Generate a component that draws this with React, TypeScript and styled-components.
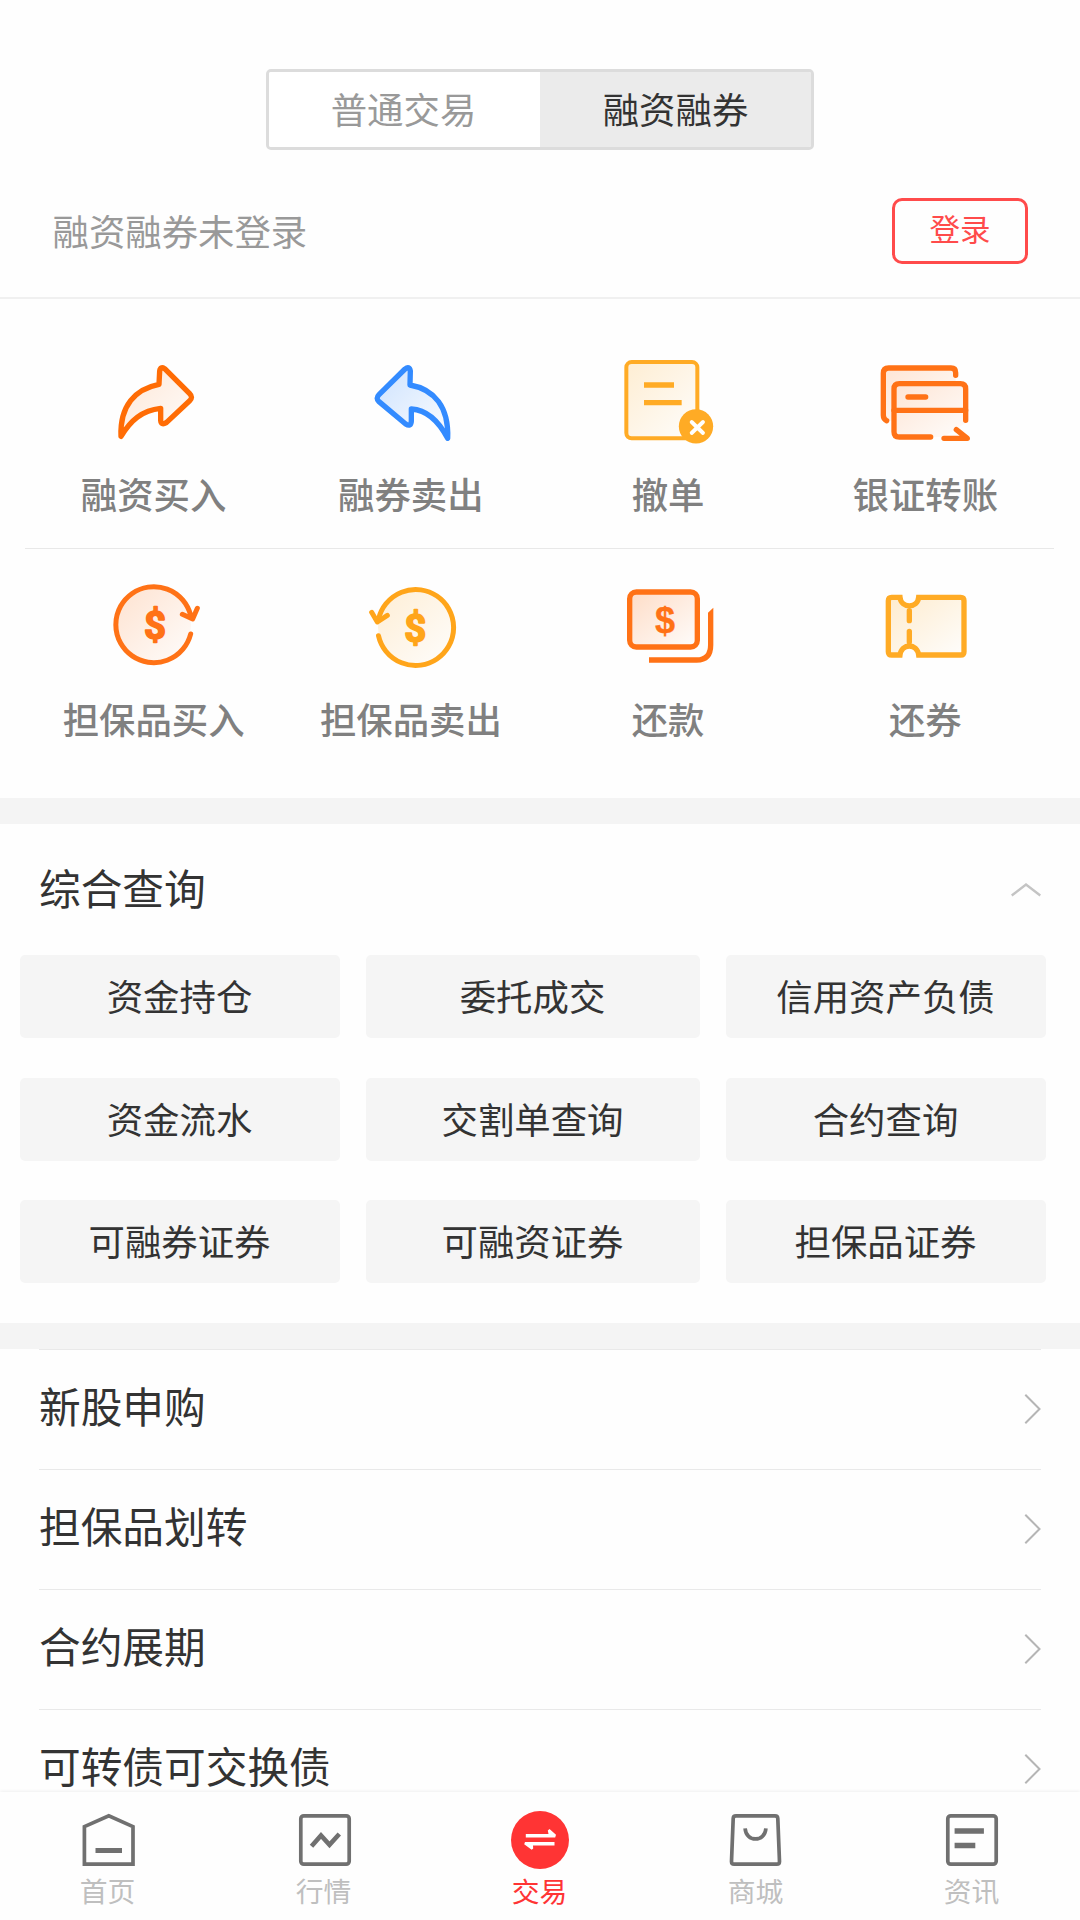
import React from "react";
import styled, { createGlobalStyle, css } from "styled-components";

const GlobalStyle = createGlobalStyle`
  * { box-sizing: border-box; }
  body {
    margin: 0;
    background: #fefefe;
    font-family: "Noto Sans CJK SC", sans-serif;
    color: #333;
  }
  button { font-family: inherit; padding: 0; margin: 0; border: 0; background: none; color: inherit; }
`;

const Page = styled.div`
  width: 1080px;
  height: 1920px;
  display: flex;
  flex-direction: column;
  overflow: hidden;
  background: #fefefe;
`;

const Content = styled.main`
  flex: 1;
  min-height: 0;
`;

const SegmentRow = styled.div`
  display: flex;
  justify-content: center;
  padding-top: 69px;
`;

const Segmented = styled.div`
  display: flex;
  width: 548px;
  height: 81px;
  border: 3px solid #dcdcdc;
  border-radius: 5px;
  overflow: hidden;
`;

const Segment = styled.button<{ $active?: boolean }>`
  flex: none;
  width: 50%;
  font-size: 36.4px;
  line-height: 72px;
  padding: 0 ${(p) => (p.$active ? 0 : 2)}px 4px 0;
  color: ${(p) => (p.$active ? "#333" : "#999")};
  background: ${(p) => (p.$active ? "#ebebeb" : "#fff")};
`;

const AccountBar = styled.div`
  display: flex;
  align-items: center;
  justify-content: space-between;
  height: 149px;
  padding: 13px 52px 0 52.5px;
  border-bottom: 2px solid #f0f0f0;
`;

const AccountText = styled.span`
  font-size: 36.4px;
  line-height: 50px;
  color: #999;
`;

const LoginButton = styled.button`
  width: 136px;
  height: 66px;
  margin-top: 2px;
  padding-bottom: 6px;
  border: 3px solid #ff4b4b;
  border-radius: 10px;
  font-size: 30.5px;
  line-height: 54px;
  color: #ff4b4b;
`;

const Shortcuts = styled.section`
  height: 499px;
  padding: 0 26px 0 25px;
`;

const ShortcutRow = styled.div<{ $top: number; $height: number; $divided?: boolean }>`
  display: grid;
  grid-template-columns: repeat(4, 1fr);
  height: ${(p) => p.$height}px;
  padding-top: ${(p) => p.$top}px;
  ${(p) => p.$divided && css`border-bottom: 1px solid #e8e8e8;`}
`;

const Shortcut = styled.div`
  display: flex;
  flex-direction: column;
  align-items: center;
`;

const ShortcutIcon = styled.svg`
  width: 100px;
  height: 100px;
  display: block;
  flex: none;
`;

const ShortcutLabel = styled.span`
  margin-top: 18px;
  font-size: 36.4px;
  font-weight: 500;
  line-height: 50px;
  color: #808080;
  white-space: nowrap;
`;

const Gap = styled.div`
  height: 26px;
  background: #f4f4f4;
`;

const QuerySection = styled.section`
  height: 499px;
`;

const QueryHeader = styled.header`
  display: flex;
  align-items: center;
  justify-content: space-between;
  height: 131px;
  padding: 0 39px;
`;

const Title = styled.h2`
  margin: 0;
  padding-bottom: 5px;
  font-size: 41.7px;
  font-weight: 400;
  line-height: 60px;
  color: #333;
`;

const UpChevron = styled.svg`
  width: 30px;
  height: 14px;
  fill: none;
  stroke: #c4c4c4;
  stroke-width: 2.4;
`;

const QueryGrid = styled.div`
  display: grid;
  grid-template-columns: 320px 334px 320px;
  grid-auto-rows: 83px;
  column-gap: 26px;
  row-gap: 39.5px;
  padding-left: 20px;
`;

const QueryButton = styled.button`
  padding: 0 1px 3px 0;
  border-radius: 5px;
  background: #f5f5f5;
  font-size: 36.4px;
  line-height: 80px;
  color: #333;
`;

const MenuList = styled.ul`
  list-style: none;
  margin: 0;
  padding: 0 39px;
`;

const MenuItem = styled.li`
  display: flex;
  align-items: center;
  justify-content: space-between;
  height: 120px;
  padding-bottom: 2px;
  border-top: 1px solid #e9e9e9;
`;

const MenuText = styled.span`
  font-size: 41.7px;
  line-height: 48px;
  padding-bottom: 8px;
`;

const RightChevron = styled.svg`
  width: 17px;
  height: 30px;
  fill: none;
  stroke: #b5b5b5;
  stroke-width: 2;
`;

const TabBar = styled.nav`
  display: grid;
  grid-template-columns: repeat(5, 1fr);
  height: 128px;
  flex: none;
  background: #fefefe;
  box-shadow: 0 -1px 3px rgba(0, 0, 0, 0.06);
  z-index: 1;
`;

const Tab = styled.div<{ $active?: boolean }>`
  display: flex;
  flex-direction: column;
  align-items: center;
  padding-top: 16px;
  color: ${(p) => (p.$active ? "#ff3434" : "#bfbfbf")};
`;

const TabIcon = styled.svg`
  width: 64px;
  height: 64px;
  display: block;
  flex: none;
  fill: none;
  stroke: #707070;
  stroke-width: 3.7;
`;

const TabLabel = styled.span`
  margin-top: -1px;
  padding-right: 1px;
  font-size: 27.8px;
  line-height: 38px;
`;

type IconName =
  | "buy" | "sell" | "cancel" | "transfer"
  | "pledgeBuy" | "pledgeSell" | "repay" | "ticket";

const DEEP = "#ff7216";
const AMBER = "#ffab25";

function Tint({ id, color, strength = 0.2 }: { id: string; color: string; strength?: number }) {
  return (
    <linearGradient id={id} x1="0" y1="0" x2="1" y2="1">
      <stop offset="0" stopColor={color} stopOpacity={strength} />
      <stop offset="1" stopColor={color} stopOpacity="0.01" />
    </linearGradient>
  );
}

const icons: Record<IconName, { box: string; art: React.ReactNode }> = {
  buy: {
    box: "132 29 300 300",
    art: (
      <>
        <Tint id="t1" color="#ff6a00" strength={0.16} />
        <path
          d="M183 288C179 196 226 146 297 132L299 92Q301 77 314 85L389 160Q400 171 389 181L319 247Q303 256 302 240V204C246 210 212 240 183 288Z"
          fill="url(#t1)" stroke="#ff6c05" strokeWidth="16" strokeLinejoin="round"
        />
      </>
    ),
  },
  sell: {
    box: "903 29 300 300",
    art: (
      <>
        <Tint id="t2" color="#338bff" strength={0.24} />
        <path
          d="M1163 294C1167 200 1123 147 1050 134L1051 92Q1048 76 1035 86L957 163Q946 174 957 184L1037 251Q1053 261 1054 242V206C1098 209 1135 240 1163 294Z"
          fill="url(#t2)" stroke="#338bff" strokeWidth="16" strokeLinejoin="round"
        />
      </>
    ),
  },
  cancel: {
    box: "114 30 300 300",
    art: (
      <>
        <Tint id="t3" color={AMBER} strength={0.2} />
        <rect x="139" y="66" width="213" height="229" rx="16" fill="url(#t3)" stroke={AMBER} strokeWidth="12" />
        <path d="M192 135H282M192 188H305" stroke={AMBER} strokeWidth="16" />
        <circle cx="348" cy="259" r="51.5" fill={AMBER} />
        <path d="M335 246L369 279M369 246L335 279" stroke="#fff" strokeWidth="11.5" strokeLinecap="round" />
      </>
    ),
  },
  transfer: {
    box: "885 30 300 300",
    art: (
      <g fill="none" stroke={DEEP} strokeWidth="16" strokeLinecap="round" strokeLinejoin="round">
        <Tint id="t4" color={DEEP} strength={0.18} />
        <path d="M910 84H1127V131H942V242H910Z" fill="url(#t4)" stroke="none" />
        <path d="M942 131H1157V250L1090 291H942Z" fill="url(#t4)" stroke="none" />
        <path d="M1127 106V98Q1127 84 1113 84H926Q910 84 910 100V226Q910 238 920 242" />
        <path d="M1052 291H958Q942 291 942 275V147Q942 131 958 131H1141Q1157 131 1157 147V241" />
        <path d="M942 211H1157M984 171H1037M1092 295H1162L1129 269" />
      </g>
    ),
  },
  pledgeBuy: {
    box: "131 45 300 300",
    art: (
      <g fill="none" stroke={DEEP} strokeWidth="15" strokeLinecap="round" strokeLinejoin="round">
        <Tint id="t5" color={DEEP} strength={0.2} />
        <circle cx="280" cy="194" r="112" fill="url(#t5)" stroke="none" />
        <path d="M391 222A114 114 0 1 1 391 166" />
        <path d="M366 163L397 177L411 145" />
        <path d="M380 169L397 177L404 160Z" fill={DEEP} strokeWidth="8" />
        <text x="284" y="238" textAnchor="middle" fontFamily="Roboto" fontWeight="700" fontSize="115" fill={DEEP} stroke={DEEP} strokeWidth="5">$</text>
      </g>
    ),
  },
  pledgeSell: {
    box: "903 45 300 300",
    art: (
      <g fill="none" stroke="#ffa51a" strokeWidth="15" strokeLinecap="round" strokeLinejoin="round">
        <Tint id="t6" color="#ffa51a" strength={0.18} />
        <circle cx="1066" cy="202" r="112" fill="url(#t6)" stroke="none" />
        <path d="M955.5 227A114 114 0 1 0 955.5 178" />
        <path d="M935 157L952 186L982 166" />
        <path d="M943 172L952 186L968 176Z" fill="#ffa51a" strokeWidth="8" />
        <text x="1066" y="246" textAnchor="middle" fontFamily="Roboto" fontWeight="700" fontSize="115" fill="#ffa51a" stroke="#ffa51a" strokeWidth="5">$</text>
      </g>
    ),
  },
  repay: {
    box: "114 45 300 300",
    art: (
      <>
        <Tint id="t7" color={DEEP} strength={0.24} />
        <rect x="149" y="96" width="203" height="165" rx="20" fill="url(#t7)" stroke={DEEP} strokeWidth="16" />
        <path d="M384 158L400 143V255Q400 308 350 308H207V292H350Q384 292 384 255Z" fill={DEEP} />
        <text x="255" y="218" textAnchor="middle" fontFamily="Liberation Sans" fontWeight="700" fontSize="108" fill={DEEP} stroke={DEEP} strokeWidth="1">$</text>
      </>
    ),
  },
  ticket: {
    box: "886 45 300 300",
    art: (
      <>
        <Tint id="t8" color={AMBER} strength={0.22} />
        <path
          d="M961 112C964 146 1014 146 1017 112H1143Q1153 112 1153 122V275Q1153 285 1143 285H1017C1012 249 966 249 961 285H936Q926 285 926 275V122Q926 112 936 112Z"
          fill="url(#t8)" stroke={AMBER} strokeWidth="16"
        />
        <path d="M989 152V182M989 214V246" stroke={AMBER} strokeWidth="16" strokeLinecap="round" />
      </>
    ),
  },
};

const rows: { name: IconName; label: string }[][] = [
  [
    { name: "buy", label: "融资买入" },
    { name: "sell", label: "融券卖出" },
    { name: "cancel", label: "撤单" },
    { name: "transfer", label: "银证转账" },
  ],
  [
    { name: "pledgeBuy", label: "担保品买入" },
    { name: "pledgeSell", label: "担保品卖出" },
    { name: "repay", label: "还款" },
    { name: "ticket", label: "还券" },
  ],
];

const queries = [
  "资金持仓", "委托成交", "信用资产负债",
  "资金流水", "交割单查询", "合约查询",
  "可融券证券", "可融资证券", "担保品证券",
];

const menu = ["新股申购", "担保品划转", "合约展期", "可转债可交换债"];

const tabs: { label: string; active?: boolean; art: React.ReactNode }[] = [
  {
    label: "首页",
    art: (
      <>
        <path d="M8.4 18.6L32.8 7.8L57 18.6V56.2H8.4Z" />
        <path d="M19.5 42.5H46" strokeWidth="5" />
      </>
    ),
  },
  {
    label: "行情",
    art: (
      <>
        <rect x="8.8" y="7.8" width="48.4" height="48.4" rx="3" />
        <path d="M19.5 38.3L29 27.5L37.5 36.8L47.3 26" strokeWidth="4.6" />
      </>
    ),
  },
  {
    label: "交易",
    active: true,
    art: (
      <>
        <circle cx="32" cy="32" r="29" fill="#ff3434" stroke="none" />
        <path d="M17.8 26H40.5L39.8 22.5L41.5 21L48 26.8L47.2 29.4H17.8ZM46.5 34V37.4H25L25.2 40.5L23.7 41.8L16.2 36.2L17 34Z" fill="#fff" stroke="none" />
      </>
    ),
  },
  {
    label: "商城",
    art: (
      <>
        <path d="M12 7.8H51Q53.7 7.8 53.8 10.5L55.5 53.5Q55.5 56.2 52.8 56.2H10.1Q7.5 56.2 7.5 53.5L9.2 10.5Q9.3 7.8 12 7.8Z" />
        <path d="M21.1 20.3C22 34.5 41 34.5 41.9 20.3" />
      </>
    ),
  },
  {
    label: "资讯",
    art: (
      <>
        <rect x="7.8" y="7.8" width="48.4" height="48.4" rx="3" />
        <path d="M14.6 23H43.9M14.6 37.5H35.3" strokeWidth="5.3" />
      </>
    ),
  },
];

export default function App() {
  return (
    <Page>
      <GlobalStyle />
      <Content>
        <SegmentRow>
          <Segmented>
            <Segment>普通交易</Segment>
            <Segment $active>融资融券</Segment>
          </Segmented>
        </SegmentRow>
        <AccountBar>
          <AccountText>融资融券未登录</AccountText>
          <LoginButton>登录</LoginButton>
        </AccountBar>
        <Shortcuts>
          {rows.map((row, i) => (
            <ShortcutRow key={i} $top={i === 0 ? 51 : 26} $height={i === 0 ? 250 : 249} $divided={i === 0}>
              {row.map((item) => (
                <Shortcut key={item.name}>
                  <ShortcutIcon viewBox={icons[item.name].box}>{icons[item.name].art}</ShortcutIcon>
                  <ShortcutLabel>{item.label}</ShortcutLabel>
                </Shortcut>
              ))}
            </ShortcutRow>
          ))}
        </Shortcuts>
        <Gap />
        <QuerySection>
          <QueryHeader>
            <Title>综合查询</Title>
            <UpChevron viewBox="0 0 30 14">
              <path d="M0.7 12.5L15 1.5L29.3 12.5" />
            </UpChevron>
          </QueryHeader>
          <QueryGrid>
            {queries.map((q) => (
              <QueryButton key={q}>{q}</QueryButton>
            ))}
          </QueryGrid>
        </QuerySection>
        <Gap />
        <MenuList>
          {menu.map((m) => (
            <MenuItem key={m}>
              <MenuText>{m}</MenuText>
              <RightChevron viewBox="0 0 17 30">
                <path d="M1.3 0.8L15.5 15L1.3 29.2" />
              </RightChevron>
            </MenuItem>
          ))}
        </MenuList>
      </Content>
      <TabBar>
        {tabs.map((t) => (
          <Tab key={t.label} $active={t.active}>
            <TabIcon viewBox="0 0 64 64">{t.art}</TabIcon>
            <TabLabel>{t.label}</TabLabel>
          </Tab>
        ))}
      </TabBar>
    </Page>
  );
}
